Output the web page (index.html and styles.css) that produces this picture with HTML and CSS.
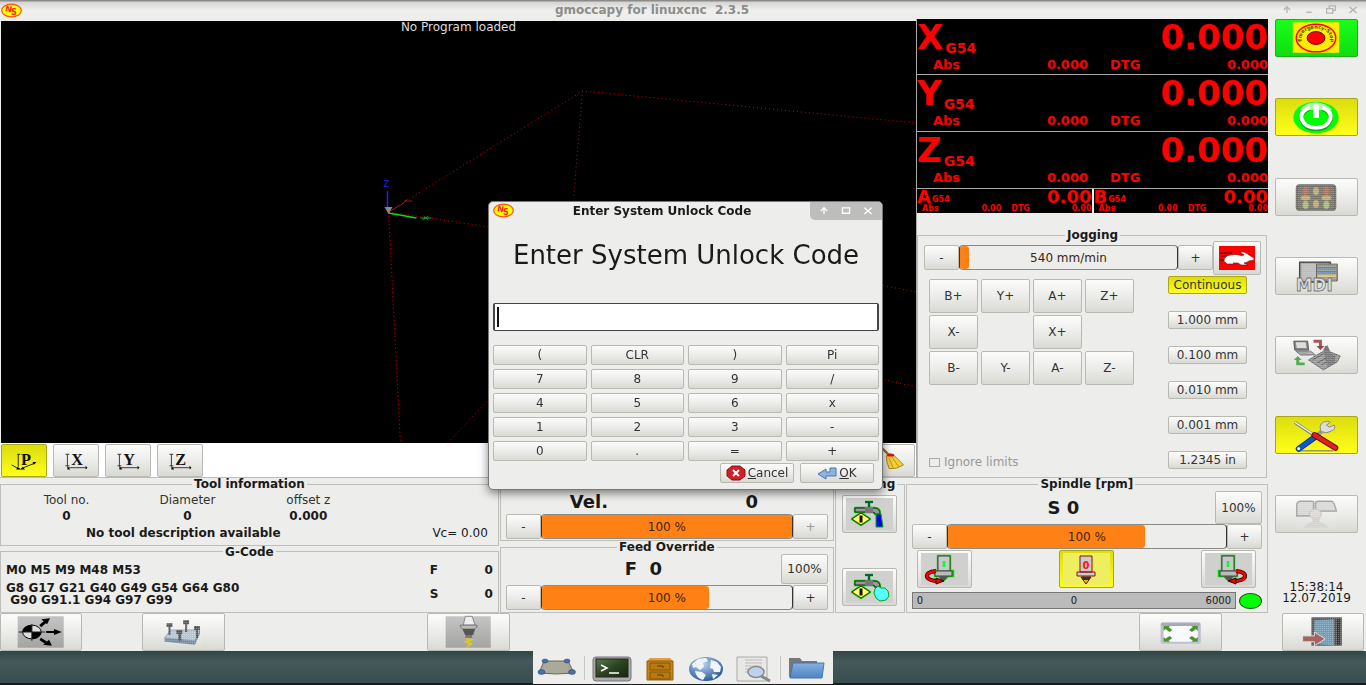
FILE: index.html
```html
<!DOCTYPE html>
<html lang="en">
<head>
<meta charset="utf-8">
<title>gmoccapy for linuxcnc 2.3.5</title>
<link rel="stylesheet" href="styles.css">
</head>
<body>
<svg class="defs" aria-hidden="true">
  <defs>
    <linearGradient id="gSteel" x1="0" x2="0" y1="0" y2="1"><stop offset="0" stop-color="#c4c4c4"/><stop offset="1" stop-color="#a4a4a2"/></linearGradient>
    <linearGradient id="gBlue" x1="0" x2="0" y1="0" y2="1"><stop offset="0" stop-color="#86b0df"/><stop offset="1" stop-color="#4f83c1"/></linearGradient>
    <linearGradient id="gTerm" x1="0" x2="1" y1="0" y2="1"><stop offset="0" stop-color="#5a7a4c"/><stop offset=".5" stop-color="#2b4420"/><stop offset="1" stop-color="#17250f"/></linearGradient>
    <radialGradient id="gGlobe" cx=".4" cy=".3" r=".7"><stop offset="0" stop-color="#b9d2f0"/><stop offset="1" stop-color="#2f5d99"/></radialGradient>
    <pattern id="pDots" width="2" height="2" patternUnits="userSpaceOnUse"><rect width="1" height="1" fill="#fff" opacity=".35"/></pattern>
    <symbol id="logo" viewBox="0 0 21 14">
      <ellipse cx="10.500" cy="7" rx="9.800" ry="6.400" fill="#ff0" stroke="#f50" stroke-width="1.200"/>
      <text x="4" y="8" font-size="8" font-weight="bold" fill="#f22" font-family="DejaVu Sans" transform="rotate(12 6 6)">N</text>
      <text x="10" y="11.500" font-size="8" font-weight="bold" fill="#f22" font-family="DejaVu Sans">S</text>
    </symbol>
    <symbol id="tap" viewBox="0 0 54 32">
      <g stroke="#0c0" stroke-width="2.400" fill="none" stroke-linejoin="round">
        <path d="M13 10h19q6 0 6 6h-5q0-2-3-2H13z"/><path d="M23 4h8M27 4v6"/><path d="M10 21l9-6 9 6-9 6z"/>
      </g>
      <path d="M13 10h19q6 0 6 6h-5q0-2-3-2H13z" fill="#999" stroke="#222"/>
      <path d="M23 9h8v6h-8z" fill="#777"/><path d="M23 4h8M27 4v5" stroke="#063" stroke-width="2.200"/>
      <path d="M10 21l9-6 9 6-9 6z" fill="#ff6" stroke="#331"/><path d="M19 17.500v7" stroke="#111" stroke-width="3"/>
    </symbol>
    <symbol id="spin" viewBox="0 0 54 36">
      <path d="M21 5h12v15h3v5h-5l-4 4-5-4h-4v-5h3z" fill="#bbb" stroke="#0c0" stroke-width="2.400"/>
      <path d="M21 5h12v15H21z" fill="#c8c8c8" stroke="#444"/><path d="M18 20h17v5H18z" fill="#bbb" stroke="#444"/><path d="M21 25h10l-3 4h-4z" fill="#555"/>
      <path d="M27 10v6" stroke="#0f3" stroke-width="2.500"/>
      <path d="M19 20Q9 21 10 26q2 4 12 4" fill="none" stroke="#300" stroke-width="4"/><path d="M19 20Q9 21 10 26q2 4 11 4" fill="none" stroke="#f00" stroke-width="2.500"/>
      <path d="M19 27l8 3-8 3z" fill="#e00" stroke="#300"/>
    </symbol>
  </defs>
</svg>

<div class="app">
  <header class="titlebar">
    <svg class="logo" aria-hidden="true"><use href="#logo"/></svg>
    <h1>gmoccapy for linuxcnc&nbsp; 2.3.5</h1>
    <div class="winctl">
      <button aria-label="Shade"><svg viewBox="0 0 10 10"><path d="M5 9V3M1.500 5.500L5 2l3.500 3.500"/></svg></button>
      <button aria-label="Minimize"><svg viewBox="0 0 10 10"><path d="M2 8h6"/></svg></button>
      <button aria-label="Restore"><svg viewBox="0 0 10 10"><path d="M0 4h7v5H0zM3 4V1h7v5H7"/></svg></button>
      <button aria-label="Close"><svg viewBox="0 0 10 10"><path d="M1 2l8 7M9 2L1 9"/></svg></button>
    </div>
  </header>

  <main class="main">
    <div class="work">
      <div class="upper">
        <section class="view">
          <div class="preview">
            <p>No Program loaded</p>
            <svg class="plot" viewBox="0 0 916 422" preserveAspectRatio="xMidYMid slice" aria-hidden="true">
              <g fill="none" stroke="#d00" stroke-dasharray="1 3">
                <path d="M388 191L582 70L916 102M582 70L573 178M388 191L400 422M388 191L884 265L916 271M447 422L490 377M880 358L916 366"/>
              </g>
              <path d="M388 191L402 183l5-5m-3 2h8" stroke="#c22" stroke-width=".7" fill="none"/>
              <path d="M388 192l28 5" stroke="#0d2" stroke-width="1.500"/><path d="M420 197h11m-8 -2l5 4m0-4l-6 4" stroke="#1a2" fill="none"/>
              <path d="M387 170v18" stroke="#22e" stroke-width="1.500"/>
              <path d="M384 186h8l-4 7z" fill="#888"/>
              <text x="383" y="166" font-size="8" fill="#22e" font-family="DejaVu Sans">Z</text>
            </svg>
          </div>
          <div class="viewbar">
            <button class="on" aria-label="Perspective view"><svg viewBox="0 0 46 32"><path d="M17 9v13M16 9h3M10 20l7 4M20 24l15-6" stroke="#220" fill="none"/><path d="M16 22l4 3-5 0zM22 22l2 3-5 0zM36 17l-4 0 1 3z"/><text x="20" y="20">P</text></svg></button>
            <button aria-label="X view"><svg viewBox="0 0 46 32"><path d="M14 9v12M12 9h4M12 21h4M15 23h18" stroke="#333" fill="none"/><path d="M14 21l3 4-3 0zM33 21l2 2-2 2z"/><text x="18" y="20">X</text></svg></button>
            <button aria-label="Y view"><svg viewBox="0 0 46 32"><path d="M14 9v12M12 9h4M12 21h4M15 23h18" stroke="#333" fill="none"/><path d="M14 21l3 4-3 0zM33 21l2 2-2 2z"/><text x="18" y="20">Y</text></svg></button>
            <button aria-label="Z view"><svg viewBox="0 0 46 32"><path d="M14 9v12M12 9h4M12 21h4M15 23h18" stroke="#333" fill="none"/><path d="M14 21l3 4-3 0zM33 21l2 2-2 2z"/><text x="18" y="20">Z</text></svg></button>
            <button class="last" aria-label="Clear plot"><svg viewBox="0 0 46 32"><path d="M12 2l9 9" stroke="#a66a10" stroke-width="2.500"/><path d="M19 8l5 1 11 11q-7 5-15 4-3-7-3-13z" fill="#f3cf3a" stroke="#a97f10"/><path d="M18 10l7 0" stroke="#c11" stroke-width="2.500"/><path d="M20 13l4 10M23 12l7 10" stroke="#b8901c"/></svg></button>
          </div>
        </section>

        <section class="side">
          <div class="dro">
            <div class="axis"><div class="top"><b>X</b><sub>G54</sub><output>0.000</output></div><div class="sub"><span>Abs</span><span>0.000</span><span>DTG</span><span>0.000</span></div></div>
            <div class="axis"><div class="top"><b>Y</b><sub>G54</sub><output>0.000</output></div><div class="sub"><span>Abs</span><span>0.000</span><span>DTG</span><span>0.000</span></div></div>
            <div class="axis"><div class="top"><b>Z</b><sub>G54</sub><output>0.000</output></div><div class="sub"><span>Abs</span><span>0.000</span><span>DTG</span><span>0.000</span></div></div>
            <div class="pair">
              <div class="axis small"><div class="top"><b>A</b><sub>G54</sub><output>0.00</output></div><div class="sub"><span>Abs</span><span>0.00</span><span>DTG</span><span>0.00</span></div></div>
              <div class="axis small"><div class="top"><b>B</b><sub>G54</sub><output>0.00</output></div><div class="sub"><span>Abs</span><span>0.00</span><span>DTG</span><span>0.00</span></div></div>
            </div>
          </div>
          <fieldset class="jog">
            <legend>Jogging</legend>
            <div class="jogspeed">
              <div class="slider"><button>-</button><div class="track"><i style="width:4%"></i><span>540 mm/min</span></div><button>+</button></div>
              <button class="rabbit" aria-label="Rapid"><svg viewBox="0 0 36 24"><path fill="red" d="M0 0h36v24H0z"/><path d="M1 7h12M2 10h8M1 14h4" stroke="#300"/><path d="M5 15q0-5 6-6 5-1 9 0 3 1 5 0l-4-3q5-1 9 3l5 3v2l-5 1q-3 2-5 2l4 2-7 0-3-2-5 0 2 1-8 0-2-2q-1 0-1-1z" fill="#fff" stroke="#611" stroke-width=".6"/></svg></button>
            </div>
            <div class="jogbody">
              <div class="jogleft">
                <div class="pads">
                  <button>B+</button><button>Y+</button><button>A+</button><button>Z+</button>
                  <button>X-</button><span></span><button>X+</button><span></span>
                  <button>B-</button><button>Y-</button><button>A-</button><button>Z-</button>
                </div>
                <label class="limits"><input type="checkbox" disabled>Ignore limits</label>
              </div>
              <div class="steps">
                <button class="on">Continuous</button><button>1.000 mm</button><button>0.100 mm</button><button>0.010 mm</button><button>0.001 mm</button><button>1.2345 in</button>
              </div>
            </div>
          </fieldset>
        </section>
      </div>

      <div class="lower">
        <div class="stack even">
          <fieldset class="tool">
            <legend>Tool information</legend>
            <dl><div><dt>Tool no.</dt><dd>0</dd></div><div><dt>Diameter</dt><dd>0</dd></div><div><dt>offset z</dt><dd>0.000</dd></div></dl>
            <p><b>No tool description available</b><span>Vc= 0.00</span></p>
          </fieldset>
          <fieldset class="gcode">
            <legend>G-Code</legend>
            <div><p>M0 M5 M9 M48 M53</p><p>G8 G17 G21 G40 G49 G54 G64 G80<br>&nbsp;G90 G91.1 G94 G97 G99</p></div>
            <dl><dt>F</dt><dd>0</dd><dt>S</dt><dd>0</dd></dl>
          </fieldset>
        </div>
        <div class="stack vels">
          <fieldset class="vel" aria-label="Velocity">
            <div class="vhead"><b>Vel.</b><b>0</b></div>
            <div class="slider"><button>-</button><div class="track"><i style="width:100%"></i><span>100 %</span></div><button disabled>+</button></div>
          </fieldset>
          <fieldset class="feed">
            <legend>Feed Override</legend>
            <div class="fhead"><b>F&nbsp; 0</b><button>100%</button></div>
            <div class="slider"><button>-</button><div class="track"><i style="width:67%"></i><span>100 %</span></div><button>+</button></div>
          </fieldset>
        </div>
        <fieldset class="cooling">
          <legend>Cooling</legend>
          <button aria-label="Flood"><svg viewBox="4 2 47 32"><use href="#tap" width="54" height="32" y="2"/><path d="M34 18h5l2 13h-7z" fill="#00e" stroke="#0a0"/></svg></button>
          <button aria-label="Mist"><svg viewBox="4 2 47 32"><use href="#tap" width="54" height="32" y="2"/><path d="M36 17l3 2 4 0 3 3 1 5-3 4-6 1-4-3-2-5 1-4z" fill="#5ff" stroke="#0a0"/></svg></button>
        </fieldset>
        <fieldset class="spindle">
          <legend>Spindle [rpm]</legend>
          <div class="shead"><b>S 0</b><button>100%</button></div>
          <div class="slider"><button>-</button><div class="track"><i style="width:71%"></i><span>100 %</span></div><button>+</button></div>
          <div class="turns">
            <button aria-label="Spindle forward"><svg viewBox="4 2 47 32"><use href="#spin" width="54" height="36"/></svg></button>
            <button class="on" aria-label="Spindle stop"><svg viewBox="4 2 47 32"><path d="M21 5h12v16H21zM18 21h18v4H18z" fill="#ccc" stroke="#811"/><path d="M22 26h10l-5 7z" fill="#fb0" stroke="#511"/><path d="M22 26h10l-2 3h-6z" fill="#333"/><text x="23.500" y="18" font-size="10" font-weight="bold" fill="#f11">0</text></svg></button>
            <button aria-label="Spindle reverse"><svg viewBox="4 2 47 32"><g transform="matrix(-1 0 0 1 54 0)"><use href="#spin" width="54" height="36"/></g></svg></button>
          </div>
          <div class="rpm"><div><span>0</span><span>0</span><span>6000</span></div><i></i></div>
        </fieldset>
      </div>
    </div>

    <nav class="modes">
      <div class="modelist">
        <button class="go" aria-label="Emergency stop"><svg viewBox="0 0 82 36"><path d="M17 2h47v31H17z" fill="#fe0"/><ellipse cx="40.500" cy="18" rx="20" ry="14" fill="#fe0" stroke="#f00" stroke-width="1.500"/><ellipse cx="40.500" cy="18" rx="9" ry="6.500" fill="#f00" stroke="#600"/><path id="arc" d="M26 22Q24 9 40 8.500Q57 9 55 25" fill="none"/><text font-size="5" font-weight="bold" fill="#541"><textPath href="#arc">Emergency-Stop</textPath></text></svg></button>
        <button class="on" aria-label="Machine on"><svg viewBox="0 0 82 36"><ellipse cx="40.500" cy="18.500" rx="23" ry="16" fill="#0f0"/><path d="M24 11q4-7 16-8 12 1 17 8z" fill="#fff" opacity=".65"/><path d="M34 8.500Q24 12 26 20q3 9 14.500 9T55 20q2-8-8-11.500" fill="none" stroke="#243" stroke-width="4.500" transform="translate(0 1)" opacity=".5"/><path d="M34 8.500Q24 12 26 20q3 9 14.500 9T55 20q2-8-8-11.500" fill="none" stroke="#fff" stroke-width="4"/><path d="M40.500 5v14" stroke="#fff" stroke-width="6"/></svg></button>
        <button aria-label="Manual"><svg viewBox="0 0 82 36"><rect x="20" y="5" width="41" height="27" rx="4" fill="#6b6863"/><rect x="22" y="7" width="37" height="23" rx="3" fill="#77736d"/><g fill="#b0705c"><ellipse cx="30" cy="12" rx="3" ry="4"/><ellipse cx="51" cy="12" rx="3" ry="4"/></g><g fill="#b9a878"><ellipse cx="40.500" cy="12" rx="3" ry="4"/><ellipse cx="30" cy="19" rx="5" ry="2.500"/><ellipse cx="51" cy="19" rx="5" ry="2.500"/><ellipse cx="40.500" cy="25" rx="3" ry="4"/></g><g fill="#a8b77e"><ellipse cx="30" cy="26" rx="3" ry="4"/><ellipse cx="51" cy="26" rx="3" ry="4"/></g><rect x="20" y="5" width="41" height="27" rx="4" fill="url(#pDots)"/></svg></button>
        <button aria-label="MDI"><svg viewBox="0 0 82 36"><path d="M24 4h31v20H24z" fill="#a9a9a9" stroke="#444" stroke-width="1.500"/><path d="M26 6h15v16H26z" fill="#bbb"/><path d="M41 6h21v17H41z" fill="#a5977a" stroke="#555"/><path d="M42 10h19M42 14h19" stroke="#5f86a8" stroke-width="2.500"/><path d="M42 18h19" stroke="#d1c28d" stroke-width="2"/><path d="M24 4h38v20H24z" fill="url(#pDots)"/><text x="20" y="33" font-size="17" font-weight="bold" fill="#dcdcda" stroke="#777" stroke-width=".8">MDI</text></svg></button>
        <button aria-label="Auto"><svg viewBox="0 0 82 36"><path d="M18 4h14l1 9H19z" fill="#888" stroke="#555"/><path d="M20 5h10l1 6H21z" fill="#ddd"/><path d="M20 14h15l5 4H25z" fill="#aaa" stroke="#777"/><path d="M38 4h7v6" fill="none" stroke="#a55" stroke-width="3"/><path d="M41 9h8l-4 4z" fill="#944"/><path d="M33 23l17-10 15 6-3 6-14 8z" fill="#999" stroke="#666"/><path d="M37 23l14-8M42 26l14-8M46 28l14-8M50 9v14" stroke="#555"/><path d="M48 12l4-4 4 9 4 1v8l-8 4z" fill="#777"/><path d="M33 13h32v20H33z" fill="url(#pDots)"/><path d="M29 27h-7v-5" fill="none" stroke="#5a5" stroke-width="3"/><path d="M18 23l4-4 4 4z" fill="#5a5"/></svg></button>
        <button class="on" aria-label="Settings"><svg viewBox="0 0 82 36"><path d="M23 34h35" stroke="#996" stroke-width="1.500"/><path d="M19 5l22 15" stroke="#777" stroke-width="3"/><path d="M19 5l21 14" stroke="#eee" stroke-width="1.500"/><path d="M40 20l11-10" stroke="#999" stroke-width="4"/><path d="M45 13q-2-8 7-9l3 1-4 3 3 2 5-2q2 4-3 6-5 3-9 1z" fill="#ddd" stroke="#888"/><path d="M41 19L23 32" stroke="#036" stroke-width="6" stroke-linecap="round"/><path d="M41 19L23 32" stroke="#15c" stroke-width="4.500" stroke-linecap="round"/><path d="M39 18l21 13" stroke="#700" stroke-width="6" stroke-linecap="round"/><path d="M39 18l21 13" stroke="#d22" stroke-width="4" stroke-linecap="round"/><circle cx="23" cy="32" r="1.500" fill="#fff"/></svg></button>
        <button aria-label="User"><svg viewBox="0 0 82 36"><g opacity=".65"><path d="M21 20V8q1-3 4-3h11q3 0 2 3v12zM40 15V8q0-3 3-3h13q3 0 5 10z" fill="#ccc" stroke="#777" stroke-width="1.500"/><path d="M40 5v3" stroke="#d63"/><ellipse cx="40" cy="18" rx="6" ry="5" fill="#d7cfc8" stroke="#aaa"/><path d="M37 22h7v5h-7z" fill="#ccc1bb"/><path d="M28 32q3-6 12-6 10 0 13 6z" fill="#ccc"/><path d="M20 4h42v29H20z" fill="url(#pDots)"/></g></svg></button>
      </div>
      <time>15:38:14<br>12.07.2019</time>
    </nav>
  </main>

  <nav class="actions">
    <button aria-label="Homing"><svg viewBox="0 0 82 36"><path d="M17 2h47v32H17z" fill="url(#gSteel)"/><ellipse cx="31.500" cy="18" rx="9.500" ry="7" fill="#ddd" stroke="#000"/><path d="M31.500 18V11q-9 0-9.500 7zM31.500 18v7q9 0 9.500-7z"/><path d="M18 18h27M31.500 10v17" stroke="#222"/><path d="M46 18h9" stroke="#000" stroke-width="2"/><path d="M54 15l8 3-8 3z"/><path d="M40 12l6-5M40 25l6 4" stroke="#000" stroke-width="3"/><path d="M41 5l9-1-3 6zM43 31l9 1-3-6z"/></svg></button>
    <button class="c2" aria-label="Touch off"><svg viewBox="0 0 82 36"><path d="M22 24l6-8h30l-5 11z" fill="#b3c5d6" stroke="#8ca2b5"/><path d="M22 24l31 3v4l-31-3zM53 27l5-11v4l-5 11z" fill="#718ba4"/><g fill="#555"><path d="M24 9h6v4h-6zM26 13h2v8h-2zM41 6h6v4h-6zM43 10h2v8h-2zM52 12h6v4h-6zM54 16h2v8h-2zM34 16h6v4h-6zM36 20h3v7h-3z"/></g><path d="M22 6h37v25H22z" fill="url(#pDots)"/></svg></button>
    <button class="c4" aria-label="Tool"><svg viewBox="0 0 82 36"><path d="M18 2h46v32H18z" fill="url(#gSteel)"/><path d="M38 2h7l3 9H36z" fill="#eee" stroke="#888"/><path d="M33 11h17v2l-3 2H36l-3-2z" fill="#bbb" stroke="#777"/><path d="M35 15h13l-2 6h-8z" fill="#555"/><path d="M38 21h7v3h-7z" fill="#777"/><path d="M39 25l5 1-5 2 5 2-4 3" fill="none" stroke="#dc1" stroke-width="2"/></svg></button>
    <button class="c9" aria-label="Full size preview"><svg viewBox="0 0 82 36"><rect x="21" y="8" width="41" height="22" rx="2" fill="#bcc0d0"/><path d="M22 9h39v3H22z" fill="#a5a9b5"/><path d="M24 12h35v16H24z" fill="#fafafe"/><g fill="#4a9427"><path d="M24 12h7l-2 1 4 3-3 2-4-3-2 2zM59 12h-7l2 1-4 3 3 2 4-3 2 2zM24 28h7l-2-1 4-3-3-2-4 3-2-2zM59 28h-7l2-1-4-3 3-2 4 3 2-2z"/></g></svg></button>
    <button class="c10" aria-label="Exit"><svg viewBox="0 0 82 36"><path d="M29 3h31v29H29z" fill="#555"/><path d="M32 6l20-1v27l-20-2z" fill="#6e9cb5"/><path d="M55 5h3v26h-3z" fill="#343434"/><path d="M29 3h31v29H29z" fill="url(#pDots)"/><path d="M20 22h12v-4l11 7-11 7v-4H20z" fill="#a66262" stroke="#ddd"/></svg></button>
  </nav>

  <footer class="taskbar">
    <nav class="dock">
      <button aria-label="Show desktop"><svg viewBox="0 0 40 28"><path d="M7 7h24l6 12q-18 2-35 0z" fill="#a9aa97" stroke="#666"/><g fill="#4c6ea4" stroke="#29466f" stroke-width=".5"><ellipse cx="8" cy="7" rx="3" ry="2"/><ellipse cx="30" cy="7" rx="3" ry="2"/><ellipse cx="4.500" cy="18" rx="3.500" ry="2.500"/><ellipse cx="35" cy="18" rx="3.500" ry="2.500"/></g></svg></button>
      <hr>
      <button aria-label="Terminal"><svg viewBox="0 0 40 28"><rect x="1" y="3" width="38" height="24" rx="3" fill="#aaa" stroke="#777"/><rect x="4" y="5" width="32" height="18" fill="url(#gTerm)" stroke="#222"/><path d="M9 11l6 3-6 3M17 19h10" fill="none" stroke="#fff" stroke-width="1.500"/></svg></button>
      <button aria-label="Files"><svg viewBox="0 0 40 28"><path d="M11 4h20l3 3H8z" fill="#e0a040"/><path d="M8 7h26v19H8z" fill="#c4831c" stroke="#915e0e"/><path d="M11 9h20v7H11zM11 18h20v7H11z" fill="#b97913" stroke="#865407"/><path d="M18 12h6v2M18 21h6v2" stroke="#5b3a08" fill="none"/></svg></button>
      <button aria-label="Web browser"><svg viewBox="0 0 40 28"><ellipse cx="20" cy="15" rx="17" ry="12" fill="url(#gGlobe)"/><path d="M6 10l6-5 8-1 2 3-5 2 1 4-4 3-4-3-3 1zM9 17l7 1 4 3-3 5q-7-2-8-9zM25 6l6 2 4 5-1 5-6 0-1-3-3-1zM26 20l6 1-5 4z" fill="#f0f4fa"/></svg></button>
      <button aria-label="Find"><svg viewBox="0 0 40 28"><path d="M4 3h30v24H4z" fill="#e8e8e6" stroke="#aaa"/><path d="M12 6h17M12 9h17M12 12h17M12 15h13M12 18h10" stroke="#bbb"/><ellipse cx="23" cy="18" rx="8" ry="5.500" fill="#bcd3f0" stroke="#8a8a88" stroke-width="1.500"/><path d="M28 22l9 5" stroke="#888" stroke-width="3"/></svg></button>
      <hr>
      <button aria-label="Home folder"><svg viewBox="0 0 40 28"><path d="M1 4h11l2 3h15v16H1z" fill="#777"/><path d="M5 9h31l-2 15H2z" fill="url(#gBlue)" stroke="#4576b3"/></svg></button>
    </nav>
  </footer>
</div>

<div class="overlay">
  <form class="dialog" role="dialog" aria-labelledby="dlgtitle">
    <header>
      <svg class="logo" aria-hidden="true"><use href="#logo"/></svg>
      <h2 id="dlgtitle">Enter System Unlock Code</h2>
      <div class="winctl">
        <button type="button" aria-label="Shade"><svg viewBox="0 0 10 10"><path d="M5 9V3M1.500 5.500L5 2l3.500 3.500"/></svg></button>
        <button type="button" aria-label="Maximize"><svg viewBox="0 0 10 10"><path d="M1 2h8v6H1z"/></svg></button>
        <button type="button" aria-label="Close"><svg viewBox="0 0 10 10"><path d="M1 2l8 7M9 2L1 9"/></svg></button>
      </div>
    </header>
    <label for="code">Enter System Unlock Code</label>
    <input id="code" type="text" autocomplete="off">
    <div class="keys">
      <button type="button">(</button><button type="button">CLR</button><button type="button">)</button><button type="button">Pi</button>
      <button type="button">7</button><button type="button">8</button><button type="button">9</button><button type="button">/</button>
      <button type="button">4</button><button type="button">5</button><button type="button">6</button><button type="button">x</button>
      <button type="button">1</button><button type="button">2</button><button type="button">3</button><button type="button">-</button>
      <button type="button">0</button><button type="button">.</button><button type="button">=</button><button type="button">+</button>
    </div>
    <div class="confirm">
      <button type="button"><svg viewBox="0 0 20 16"><path d="M6 1h8l5 4v6l-5 4H6l-5-4V5z" fill="#d11f26" stroke="#8f1015"/><path d="M7 5l6 6M13 5l-6 6" stroke="#fff" stroke-width="2"/></svg><span><u>C</u>ancel</span></button>
      <button type="button"><svg viewBox="0 0 20 16"><path d="M1 9l8-5v3h4V3h6v8H9v3z" fill="#8db4df" stroke="#4676ad"/></svg><span><u>O</u>K</span></button>
    </div>
  </form>
</div>
</body>
</html>
```
FILE: styles.css
```css
* { box-sizing: border-box; }
body { margin: 0; font: 12px/14px "DejaVu Sans", sans-serif; color: #1a1a1a; background: #ededeb; }
h1, h2, p, dl, dd, dt, hr { margin: 0; }
svg { display: block; }
.defs { position: absolute; width: 0; height: 0; }
.app { min-height: 100vh; display: flex; flex-direction: column; }

button {
  font: inherit; color: #333; margin: 0; padding: 0; border: 1px solid #b9b9b4; border-radius: 2px;
  background: linear-gradient(#fcfcfb, #ececea 50%, #d9d9d4);
  display: flex; align-items: center; justify-content: center; min-width: 0;
}
button.on { background: linear-gradient(#dcdc10, #ffff18); border-color: #a8a814; }
button.go { background: linear-gradient(#18ff18, #10dc10); border-color: #1eae1e; }
button:disabled { color: #999; }

fieldset { margin: 0; padding: 0 5px; min-width: 0; border: 1px solid #bebebb; }
legend { margin: 0 auto; padding: 0 2px; font-weight: bold; line-height: 12px; }

.titlebar { height: 19px; display: flex; align-items: center; background: linear-gradient(#8e8a8a 0, #8e8a8a 1px, #d4d4d2 2px, #efefed 10px, #ededeb); }
.titlebar h1 { flex: 1; text-align: center; font-size: 12px; color: #8c8c8a; }
.logo { width: 21px; height: 15px; flex: none; }
.winctl { display: flex; gap: 12px; }
.winctl button { border: 0; background: none; width: 10px; height: 10px; }
.winctl svg { width: 10px; height: 9px; fill: none; stroke: #b5b5b3; stroke-width: 1.5; }
.titlebar .winctl { padding-right: 8px; }
.titlebar .logo { margin: 1px 0 0 1px; }

.main { flex: 1; display: flex; }
.work { flex: 1; min-width: 0; display: flex; flex-direction: column; }
.upper { flex: 1; display: flex; }
.view { flex: 1; min-width: 0; display: flex; flex-direction: column; padding-top: 2px; }
.preview { flex: 1; background: #000; color: #fff; margin-left: 1px; position: relative; }
.preview p { text-align: center; font-size: 12px; line-height: 12px; color: #ddd; }
.plot { position: absolute; inset: 0; width: 100%; height: 100%; }
.viewbar { display: flex; gap: 6px; height: 35px; padding: 1px 1px 0; background: #fff; border-bottom: 1px solid #bbb; }
.viewbar button { width: 46px; }
.viewbar .last { margin-left: auto; }
.viewbar svg { width: 46px; height: 32px; }
.viewbar text { font: bold 17px "Liberation Serif", serif; fill: #111; }

.side { flex: 0 0 352px; display: flex; flex-direction: column; gap: 16px; border-left: 1px solid #aaa; }
.dro { background: #000; color: #f00; font-weight: bold; }
.axis { height: 56px; border-bottom: 1px solid #aaa; }
.axis + .axis { height: 57px; }
.top { display: flex; height: 37px; line-height: 36px; font-size: 34px; }
.top sub { align-self: flex-end; font-size: 14px; line-height: 16px; padding-left: 2px; }
.top output { margin-left: auto; }
.sub { display: grid; grid-template-columns: 30px 125fr 60px 120fr; font-size: 13px; line-height: 17px; padding-left: 16px; }
.sub span:nth-child(2n) { text-align: right; }
.sub span:nth-child(3) { padding-left: 22px; }
.pair { display: grid; grid-template-columns: 1fr 1fr; gap: 2px; background: #eee; }
.pair .axis { height: 24px; border: 0; background: #000; }
.small .top { height: 15px; line-height: 15px; font-size: 18px; }
.small .top sub { font-size: 8px; line-height: 9px; padding-left: 1px; }
.small .sub { grid-template-columns: 18px 4fr 29px 4fr; font-size: 8px; line-height: 9px; padding-left: 5px; }
.small .sub span:nth-child(3) { padding-left: 10px; }

.jog { flex: 1; display: flex; flex-direction: column; padding: 0 5px 0 6px; margin-right: 1px; }
.jogspeed { display: flex; height: 34px; }
.jogspeed .slider { flex: 1; margin: 4px 0; }
.rabbit { width: 48px; }
.rabbit svg { width: 36px; height: 24px; }
.slider { display: flex; height: 25px; }
.slider button { width: 35px; }
.track { flex: 1; position: relative; border: 1px solid #666; border-color: #8a8a86 #333; border-radius: 4px; background: #ededeb; display: flex; align-items: center; justify-content: center; overflow: hidden; }
.track i { position: absolute; left: 0; top: 0; bottom: 0; background: #ff8115; border-radius: 3px; }
.track span { position: relative; color: #3a2410; }
.jogbody { flex: 1; display: flex; justify-content: space-between; padding: 1px 14px 8px 5px; }
.jogleft { display: flex; flex-direction: column; justify-content: space-between; padding: 3px 0 0; }
.pads { display: grid; grid-template-columns: repeat(4, 49px); grid-auto-rows: 34px; gap: 2px 3px; }
.limits { display: flex; align-items: center; gap: 4px; color: #999; }
.limits input { appearance: none; width: 11px; height: 9px; margin: 0; border: 1px solid #aaa; }
.steps { display: flex; flex-direction: column; justify-content: space-between; width: 79px; }
.steps button { height: 18px; }

.lower { display: grid; grid-template-columns: 500fr 335fr 70fr 363fr; column-gap: 1px; min-height: 135px; }
.stack { display: grid; min-width: 0; }
.even { grid-template-rows: 1fr 1fr; }
.vels { grid-template-rows: 63fr 72fr; }
.tool dl { display: grid; grid-template-columns: 1fr 1fr 1fr; text-align: center; padding: 2px 124px 0 0; line-height: 16px; }
.tool dt { color: #333; }
.tool dd { font-weight: bold; }
.tool p { display: flex; justify-content: space-between; padding: 1px 5px 0 80px; line-height: 16px; }
.gcode { display: flex; justify-content: space-between; font-weight: bold; line-height: 12px; }
.gcode p { padding-top: 6px; }
.gcode dl { display: grid; grid-template-columns: 1fr 1fr; width: 63px; align-content: start; row-gap: 12px; padding-top: 6px; }
.gcode dd { text-align: right; }
.vel { margin-top: 6px; padding-top: 5px; }
.vhead { display: flex; justify-content: space-between; padding: 0 70px 0 64px; font-size: 18px; line-height: 24px; }
.fhead, .shead { display: grid; grid-template-columns: 1fr 47px; align-items: center; text-align: center; font-size: 18px; height: 32px; line-height: 24px; }
.fhead { padding: 1px 0; }
.fhead button, .shead button { font-size: 12px; height: 100%; }
.cooling { display: flex; flex-direction: column; justify-content: space-between; padding: 5px 6px 6px; }
.cooling button, .turns button { height: 38px; width: 55px; }
.cooling svg, .turns svg { width: 47px; height: 32px; background: #d0d0cf; }
.turns .on svg { background: #eeee60; }
.spindle { display: flex; flex-direction: column; }
.shead { height: 33px; flex: none; margin-top: 1px; }
.spindle .slider { flex: none; }
.turns { display: flex; justify-content: space-between; padding: 1px 6px 0 5px; }
.rpm { display: flex; align-items: center; gap: 3px; margin-top: 4px; }
.rpm div { flex: 1; height: 17px; display: flex; justify-content: space-between; align-items: center; padding: 0 4px; background: #bbb; border: 1px solid #777; font-size: 10px; }
.rpm span { flex: 1; text-align: center; }
.rpm span:first-child { text-align: left; }
.rpm span:last-child { text-align: right; }
.rpm i { width: 23px; height: 16px; border-radius: 50%; background: #0f0; border: 1px solid #161; }

.modes { flex: 0 0 98px; display: flex; flex-direction: column; padding: 0 8px 9px 7px; }
.modelist { flex: 1; display: flex; flex-direction: column; justify-content: space-between; }
.modelist button, .actions button { height: 38px; }
.modelist svg, .actions svg { width: 81px; height: 36px; }
.modes time { display: block; margin-top: 49px; line-height: 11px; text-align: center; white-space: nowrap; }

.actions { display: grid; grid-template-columns: repeat(10, 1fr); column-gap: 60px; padding-right: 2px; }
.c2 { grid-column: 2; }
.c4 { grid-column: 4; }
.c9 { grid-column: 9; }
.c10 { grid-column: 10; }

.taskbar { height: 34px; display: flex; justify-content: center; background: linear-gradient(#324645, #44585a 30%, #3a4d4e 94%, #151c1c 95%); }
.dock { display: flex; align-items: center; gap: 7px; padding: 0 5px 0 4px; background: #ededeb; margin-bottom: 1px; }
.dock button { border: 0; background: none; }
.dock svg { width: 40px; height: 28px; }
.dock hr { width: 1px; height: 24px; border: 0; background: #c5c5c2; }

.overlay { position: fixed; inset: 0; display: grid; place-items: center; padding: 5px 0 0 5px; }
.dialog { width: 395px; padding: 0 3px 6px 4px; background: #ededeb; border: 1px solid #777; border-radius: 5px; box-shadow: 0 3px 10px rgba(0,0,0,.5); }
.dialog header { display: flex; align-items: center; height: 18px; margin-right: -3px; }
.dialog h2 { flex: 1; text-align: center; font-size: 12px; }
.dialog .winctl { height: 18px; align-items: center; padding: 0 9px; background: #bdbdbb; border-radius: 0 4px 0 5px; }
.dialog .winctl svg { stroke: #fff; }
.dialog label { display: block; text-align: center; font-size: 26px; line-height: 32px; padding: 19px 0 32px; white-space: nowrap; }
.dialog input { display: block; width: 100%; height: 28px; padding: 0 6px; border: 2px solid #444; border-width: 1px 2px; border-radius: 2px; font: inherit; background: linear-gradient(#111, #111) 2px 3px / 2px 20px no-repeat #fff; }
.keys { display: grid; grid-template-columns: repeat(4, 1fr); grid-auto-rows: 20px; gap: 4px; padding: 14px 0 2px; }
.confirm { display: flex; justify-content: flex-end; gap: 6px; padding-right: 5px; }
.confirm button { width: 74px; height: 20px; gap: 2px; }
.confirm svg { width: 20px; height: 16px; }
```
